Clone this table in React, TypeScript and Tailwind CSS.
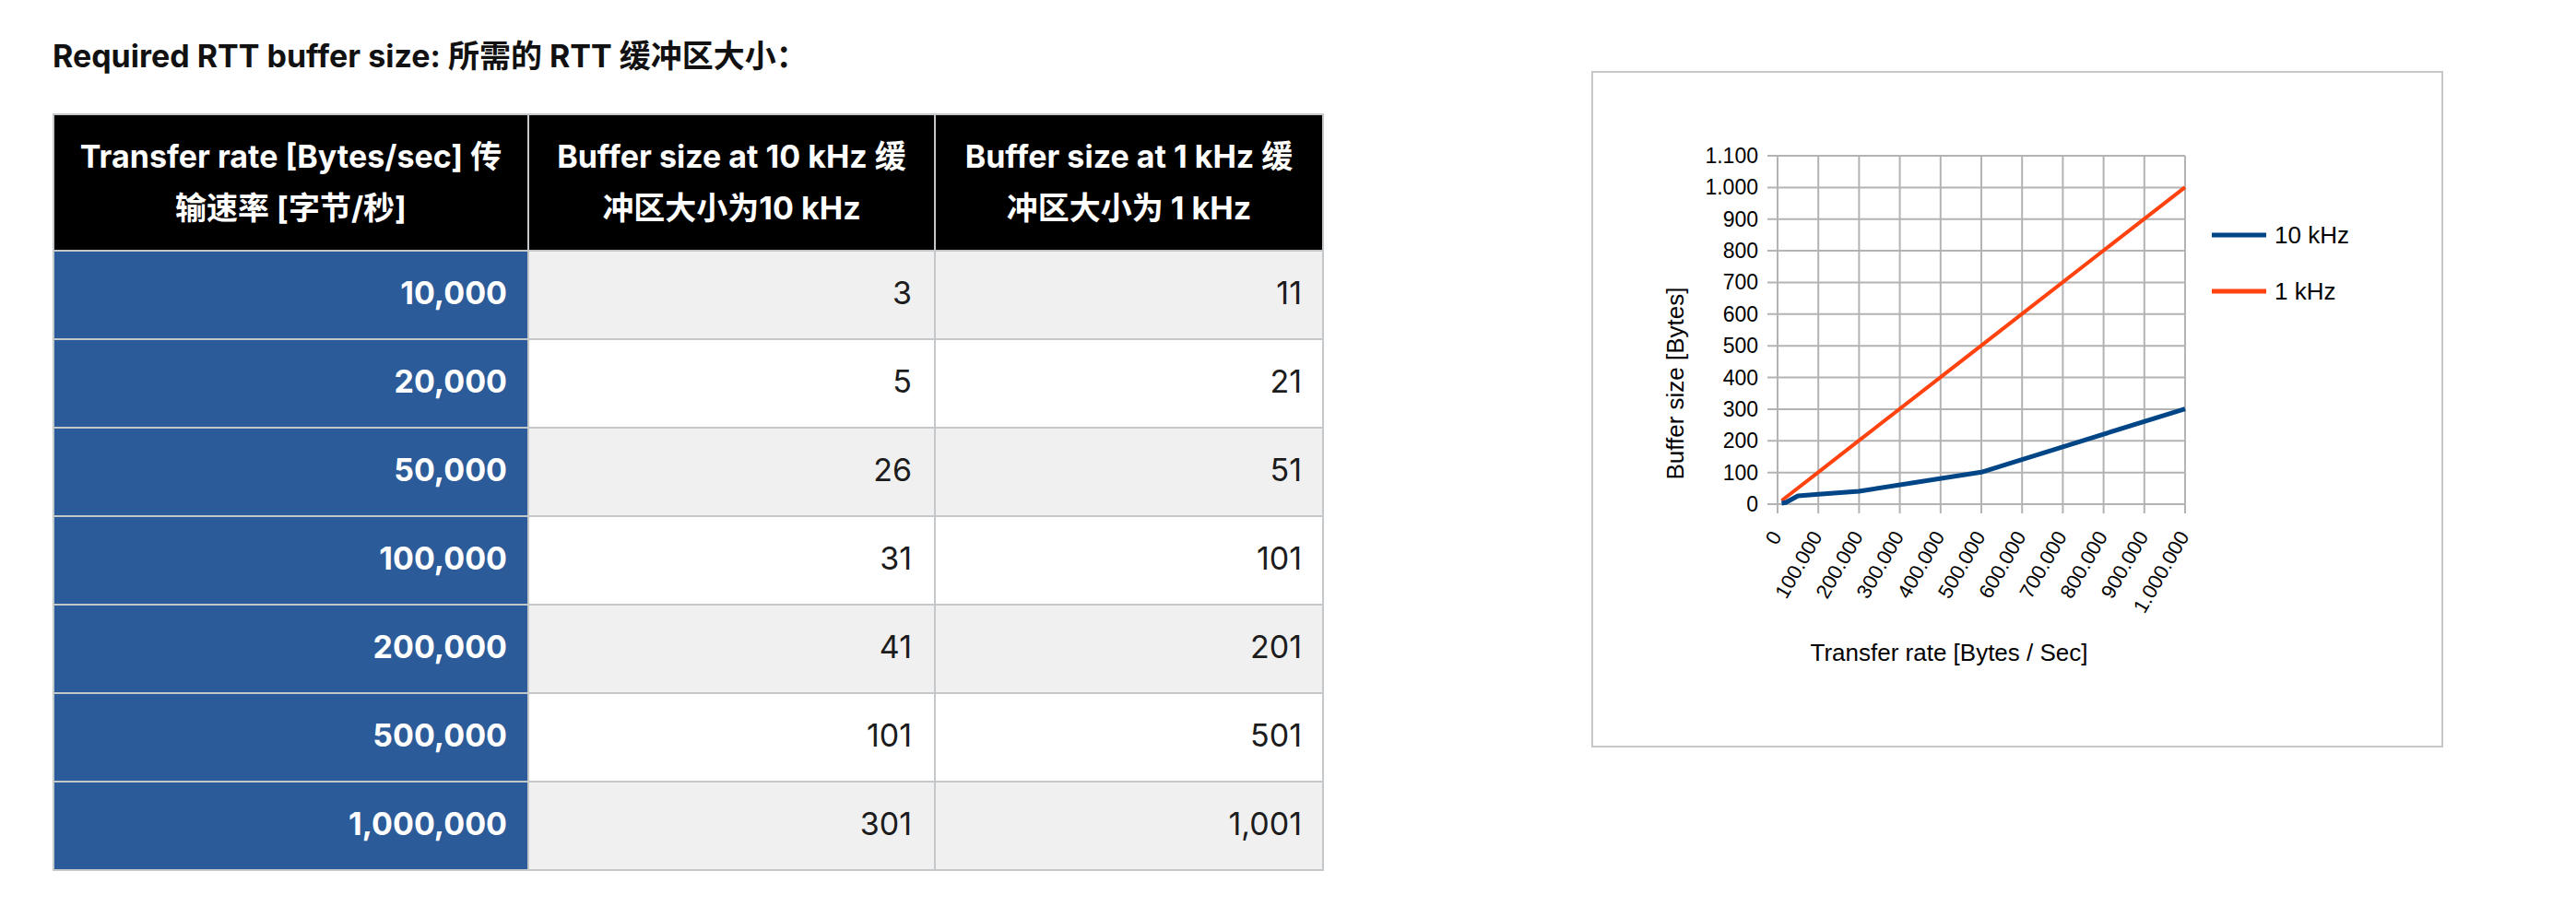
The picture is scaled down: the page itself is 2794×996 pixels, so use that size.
import React from 'react';

const ROWS = [
  ['10,000', '3', '11'],
  ['20,000', '5', '21'],
  ['50,000', '26', '51'],
  ['100,000', '31', '101'],
  ['200,000', '41', '201'],
  ['500,000', '101', '501'],
  ['1,000,000', '301', '1,001'],
];

// chart geometry, relative to the chart box corner
const X0 = 202;
const XSTEP = 44.2;
const Y0 = 470;
const YSTEP = 34.36;

const px = (v: number) => X0 + (v / 100000) * XSTEP;
const py = (v: number) => Y0 - (v / 100) * YSTEP;

const KHZ10 = [[10000, 3], [20000, 5], [50000, 26], [100000, 31], [200000, 41], [500000, 101], [1000000, 301]];
const KHZ1 = [[10000, 11], [20000, 21], [50000, 51], [100000, 101], [200000, 201], [500000, 501], [1000000, 1001]];

const yLabels = ['0', '100', '200', '300', '400', '500', '600', '700', '800', '900', '1.000', '1.100'];
const xLabels = ['0', '100.000', '200.000', '300.000', '400.000', '500.000', '600.000', '700.000', '800.000', '900.000', '1.000.000'];

const toPoints = (data: number[][]) => data.map(([x, y]) => `${px(x)},${py(y)}`).join(' ');

const Chart = () => {
  const font = "'Liberation Sans', Arial, sans-serif";
  return (
    <div className="w-[924px] h-[734px] border-2 border-[#c8c8c8] bg-white shrink-0">
      <svg width="920" height="730" viewBox="2 2 920 730" style={{ fontFamily: font }}>
        {/* grid */}
        {yLabels.map((_, i) => (
          <line key={'h' + i} x1={X0 - 11} x2={X0 + XSTEP * 10} y1={Y0 - i * YSTEP} y2={Y0 - i * YSTEP} stroke="#b3b3b3" strokeWidth="2" />
        ))}
        {xLabels.map((_, i) => (
          <line key={'v' + i} x1={X0 + i * XSTEP} x2={X0 + i * XSTEP} y1={Y0 - 11 * YSTEP} y2={Y0 + 10} stroke="#b3b3b3" strokeWidth="2" />
        ))}

        {/* y labels */}
        {yLabels.map((t, i) => (
          <text key={'yl' + i} x={181} y={Y0 - i * YSTEP + 8} fontSize="23" textAnchor="end" fill="#000">{t}</text>
        ))}

        {/* x labels */}
        {xLabels.map((t, i) => {
          const x = X0 + i * XSTEP + 5;
          const y = 505;
          return (
            <text key={'xl' + i} x={x} y={y} fontSize="22" textAnchor="end" fill="#000" transform={`rotate(-60 ${x} ${y})`}>{t}</text>
          );
        })}

        {/* series */}
        <polyline points={toPoints(KHZ1)} fill="none" stroke="#ff420e" strokeWidth="4" strokeLinejoin="round" />
        <polyline points={toPoints(KHZ10)} fill="none" stroke="#004586" strokeWidth="5" strokeLinejoin="round" />

        {/* axis titles */}
        <text x={100} y={339} fontSize="26" textAnchor="middle" transform="rotate(-90 100 339)" fill="#000">Buffer size [Bytes]</text>
        <text x={388} y={640} fontSize="26" textAnchor="middle" fill="#000">Transfer rate [Bytes / Sec]</text>

        {/* legend */}
        <line x1={673} x2={732} y1={178} y2={178} stroke="#004586" strokeWidth="5" />
        <text x={741} y={187} fontSize="26" fill="#000">10 kHz</text>
        <line x1={673} x2={732} y1={239} y2={239} stroke="#ff420e" strokeWidth="5" />
        <text x={741} y={248} fontSize="26" fill="#000">1 kHz</text>
      </svg>
    </div>
  );
};

const App = () => {
  const cell = 'border-2 border-[#c5c8cb]';
  return (
    <div
      className="min-h-screen w-full bg-white flex items-start pl-[57px] pt-[33px]"
      style={{ fontFamily: "Inter, 'Noto Sans CJK SC', sans-serif" }}
    >
      {/* table section */}
      <div className="flex flex-col shrink-0">
        <h2 className="text-[34px] leading-[56px] font-bold text-[#111]">
          Required RTT buffer size: 所需的 RTT 缓冲区大小：
        </h2>
        <table className="mt-[34px] border-collapse table-fixed w-[1377px] text-[34px] leading-[56px]">
          <colgroup>
            <col className="w-[515px]" />
            <col className="w-[441px]" />
            <col className="w-[421px]" />
          </colgroup>
          <thead>
            <tr className="bg-black text-white font-bold">
              <th className={`${cell} px-4 py-[17px] text-center font-bold`}>
                Transfer rate [Bytes/sec] 传<br />输速率 [字节/秒]
              </th>
              <th className={`${cell} px-4 py-[17px] text-center font-bold`}>
                Buffer size at 10 kHz 缓<br />冲区大小为10 kHz
              </th>
              <th className={`${cell} px-4 py-[17px] text-center font-bold`}>
                Buffer size at 1 kHz 缓<br />冲区大小为 1 kHz
              </th>
            </tr>
          </thead>
          <tbody>
            {ROWS.map(([rate, a, b], i) => (
              <tr key={rate} className={i % 2 === 0 ? 'bg-[#f0f0f0]' : 'bg-white'}>
                <td className={`${cell} bg-[#2c5b99] text-white font-bold text-right pr-[22px] pt-[17px] pb-[21px]`}>{rate}</td>
                <td className={`${cell} text-[#1c1c1c] text-right pr-[24px] pt-[17px] pb-[21px]`}>{a}</td>
                <td className={`${cell} text-[#1c1c1c] text-right pr-[22px] pt-[17px] pb-[21px]`}>{b}</td>
              </tr>
            ))}
          </tbody>
        </table>
      </div>

      {/* chart */}
      <div className="ml-[290px] mt-[44px]">
        <Chart />
      </div>
    </div>
  );
};

export default App;
